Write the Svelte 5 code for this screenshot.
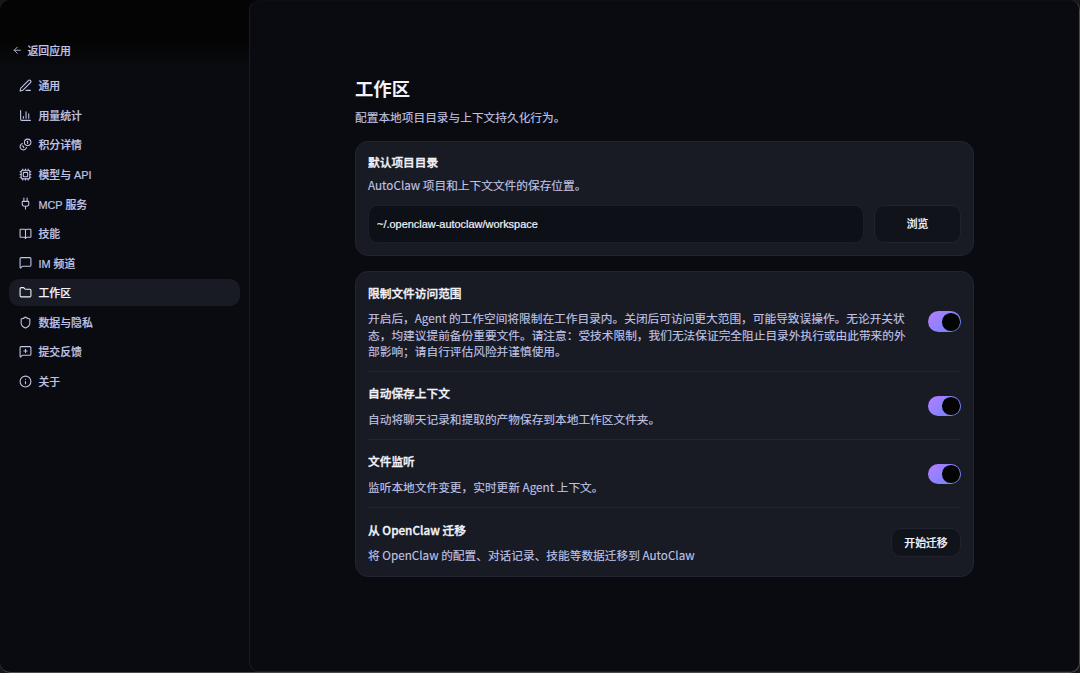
<script lang="ts">
	let active = $state('workspace');

	const navItems = [
		{ id: 'general', label: '通用' },
		{ id: 'usage', label: '用量统计' },
		{ id: 'credits', label: '积分详情' },
		{ id: 'models', label: '模型与 API' },
		{ id: 'mcp', label: 'MCP 服务' },
		{ id: 'skills', label: '技能' },
		{ id: 'im', label: 'IM 频道' },
		{ id: 'workspace', label: '工作区' },
		{ id: 'privacy', label: '数据与隐私' },
		{ id: 'feedback', label: '提交反馈' },
		{ id: 'about', label: '关于' }
	];

	let workspacePath = $state('~/.openclaw-autoclaw/workspace');

	let settings = $state([
		{
			id: 'restrict',
			title: '限制文件访问范围',
			text: '开启后，Agent 的工作空间将限制在工作目录内。关闭后可访问更大范围，可能导致误操作。无论开关状态，均建议提前备份重要文件。请注意：受技术限制，我们无法保证完全阻止目录外执行或由此带来的外部影响；请自行评估风险并谨慎使用。',
			on: true
		},
		{
			id: 'autosave',
			title: '自动保存上下文',
			text: '自动将聊天记录和提取的产物保存到本地工作区文件夹。',
			on: true
		},
		{
			id: 'watch',
			title: '文件监听',
			text: '监听本地文件变更，实时更新 Agent 上下文。',
			on: true
		}
	]);
</script>

{#snippet icon(id: string)}
	<svg class="icon" viewBox="0 0 24 24">
		{#if id === 'general'}
			<path d="M13 21h8" />
			<path d="M21.174 6.812a1 1 0 0 0-3.986-3.987L3.842 16.174a2 2 0 0 0-.5.83l-1.321 4.352a.5.5 0 0 0 .623.622l4.353-1.32a2 2 0 0 0 .83-.497z" />
		{:else if id === 'usage'}
			<path d="M3 3v16a2 2 0 0 0 2 2h16" />
			<path d="M8 17v-3M13 17V5M18 17V9" />
		{:else if id === 'credits'}
			<path d="M13.744 17.736a6 6 0 1 1-7.48-7.48" />
			<path d="M15 6h1v4" />
			<path d="m6.134 14.768.866-.5 2 3.464" />
			<circle cx="16" cy="8" r="6" />
		{:else if id === 'models'}
			<rect x="4" y="4" width="16" height="16" rx="2" />
			<rect x="8" y="8" width="8" height="8" rx="1" />
			<path d="M7 2v2M12 2v2M17 2v2M7 20v2M12 20v2M17 20v2M2 7h2M2 12h2M2 17h2M20 7h2M20 12h2M20 17h2" />
		{:else if id === 'mcp'}
			<path d="M12 22v-5M15 8V2M9 8V2" />
			<path d="M17 8a1 1 0 0 1 1 1v4a4 4 0 0 1-4 4h-4a4 4 0 0 1-4-4V9a1 1 0 0 1 1-1z" />
		{:else if id === 'skills'}
			<path d="M12 5v16" />
			<path d="M12 5a3 3 0 0 0-2-1H3a1 1 0 0 0-1 1v13a1 1 0 0 0 1 1h6a3 3 0 0 1 3 2 3 3 0 0 1 3-2h6a1 1 0 0 0 1-1V5a1 1 0 0 0-1-1h-7a3 3 0 0 0-2 1z" />
		{:else if id === 'im'}
			<path d="M22 17a2 2 0 0 1-2 2H6.828a2 2 0 0 0-1.414.586l-2.202 2.202A.71.71 0 0 1 2 21.286V5a2 2 0 0 1 2-2h16a2 2 0 0 1 2 2z" />
		{:else if id === 'workspace'}
			<path d="M20 20a2 2 0 0 0 2-2V8a2 2 0 0 0-2-2h-7.9a2 2 0 0 1-1.69-.9L9.6 3.9A2 2 0 0 0 7.93 3H4a2 2 0 0 0-2 2v13a2 2 0 0 0 2 2z" />
		{:else if id === 'privacy'}
			<path d="M20 13c0 5-3.5 7.5-7.66 8.95a1 1 0 0 1-.67-.01C7.5 20.5 4 18 4 13V6a1 1 0 0 1 1-1c2 0 4.5-1.2 6.24-2.72a1.17 1.17 0 0 1 1.52 0C14.51 3.81 17 5 19 5a1 1 0 0 1 1 1z" />
		{:else if id === 'feedback'}
			<path d="M22 17a2 2 0 0 1-2 2H6.828a2 2 0 0 0-1.414.586l-2.202 2.202A.71.71 0 0 1 2 21.286V5a2 2 0 0 1 2-2h16a2 2 0 0 1 2 2z" />
			<path d="M12 8v6M9 11h6" />
		{:else}
			<circle cx="12" cy="12" r="10" />
			<path d="M12 16v-4M12 8h.01" />
		{/if}
	</svg>
{/snippet}

<div class="window">
	<aside class="sidebar">
		<button class="back">
			<svg class="arrow" viewBox="0 0 24 24"><path d="m12 19-7-7 7-7M19 12H5" /></svg>
			<span>返回应用</span>
		</button>
		<nav>
			{#each navItems as item (item.id)}
				<button class="navItem" class:active={active === item.id} onclick={() => (active = item.id)}>
					{@render icon(item.id)}
					<span>{item.label}</span>
				</button>
			{/each}
		</nav>
	</aside>

	<main>
		<div class="content">
			<h1>工作区</h1>
			<p class="intro">配置本地项目目录与上下文持久化行为。</p>

			<section class="card folder">
				<h2>默认项目目录</h2>
				<p>AutoClaw 项目和上下文文件的保存位置。</p>
				<div class="pathRow">
					<input bind:value={workspacePath} spellcheck="false" />
					<button class="browse"><span>浏览</span></button>
				</div>
			</section>

			<section class="card options">
				{#each settings as setting (setting.id)}
					<div class="row {setting.id}">
						<div class="text">
							<h2>{setting.title}</h2>
							<p>{setting.text}</p>
						</div>
						<button
							class="toggle"
							class:on={setting.on}
							aria-label={setting.title}
							onclick={() => (setting.on = !setting.on)}
						>
							<span class="knob"></span>
						</button>
					</div>
				{/each}
				<div class="row migrate">
					<div class="text">
						<h2>从 OpenClaw 迁移</h2>
						<p>将 OpenClaw 的配置、对话记录、技能等数据迁移到 AutoClaw</p>
					</div>
					<button class="start"><span>开始迁移</span></button>
				</div>
			</section>
		</div>
	</main>
</div>

<style>
	:global(body) {
		margin: 0;
		background: #17151d;
	}

	.window {
		display: flex;
		box-sizing: border-box;
		width: 1080px;
		height: 673px;
		overflow: hidden;
		border-right: 1px solid #4a494e;
		border-bottom: 1px solid #4a494e;
		border-radius: 10px;
		background: linear-gradient(#040404 40px, #0a0b10 68px);
		font-family: 'Noto Sans CJK SC', sans-serif;
		color: #f2f3fa;
	}

	button,
	input {
		box-sizing: border-box;
		margin: 0;
		font-family: 'Liberation Sans', 'Noto Sans CJK SC', sans-serif;
		font-size: 10.85px;
		font-weight: 500;
		-webkit-text-stroke: 0.2px currentColor;
	}

	button {
		cursor: pointer;
	}

	svg {
		flex: none;
		fill: none;
		stroke: currentColor;
		stroke-width: 2;
		stroke-linecap: round;
		stroke-linejoin: round;
	}

	.sidebar {
		box-sizing: border-box;
		flex: none;
		width: 249px;
		padding: 40px 9.5px 0 9px;
	}

	.back {
		display: flex;
		align-items: center;
		gap: 5px;
		height: 20px;
		padding: 0 3px;
		border: 0;
		background: none;
		color: #c0c4e4;
	}

	.back span {
		padding-bottom: 1px;
	}

	.arrow {
		width: 10.5px;
		height: 10.5px;
	}

	nav {
		display: flex;
		flex-direction: column;
		gap: 2.92px;
		padding-top: 12.4px;
	}

	.navItem {
		display: flex;
		align-items: center;
		gap: 6.5px;
		height: 26.65px;
		padding: 0 10px;
		border: 0;
		border-radius: 10px;
		background: transparent;
		color: #c0c4e4;
		text-align: left;
	}

	.navItem span {
		padding-bottom: 0.8px;
	}

	.navItem.active {
		background: #181a24;
		color: #f2f3fa;
	}

	.icon {
		width: 13px;
		height: 13px;
	}

	main {
		box-sizing: border-box;
		flex: 1;
		border: 1px solid #1a1b26;
		border-top-color: #0d0e14;
		border-right: 0;
		border-radius: 10px;
		background: #0a0b10;
	}

	.content {
		width: 619px;
		padding: 73px 0 0 105px;
	}

	h1,
	h2,
	p {
		margin: 0;
	}

	h1 {
		font-size: 18.33px;
		font-weight: 700;
		line-height: 28px;
	}

	.intro {
		margin-top: 7px;
	}

	h2 {
		font-size: 11.7px;
		font-weight: 500;
		line-height: 18px;
		-webkit-text-stroke: 0.35px currentColor;
	}

	p {
		font-size: 11.7px;
		line-height: 16.5px;
		color: #c0c4e4;
		-webkit-text-stroke: 0.12px currentColor;
	}

	.card {
		box-sizing: border-box;
		border: 1px solid #222431;
		border-radius: 13px;
		background: #181a24;
	}

	.folder {
		height: 115px;
		margin-top: 15px;
		padding: 11px 12px 12px;
	}

	.folder p {
		margin-top: 6.2px;
	}

	.pathRow {
		display: flex;
		gap: 10px;
		margin-top: 12.3px;
	}

	input {
		flex: 1;
		height: 38px;
		padding: 0 8px 1px;
		border: 1px solid #1c1e29;
		border-radius: 10px;
		outline: none;
		background: #0d1016;
		color: #f2f3fa;
		font-size: 10.95px;
	}

	.browse,
	.start {
		border: 1px solid #20222e;
		border-radius: 10px;
		background: #11131a;
		color: #f2f3fa;
	}

	.browse {
		width: 87px;
		height: 38px;
		padding: 0 6px 2px;
	}

	.options {
		height: 306px;
		margin-top: 15.7px;
		padding: 0 12px;
	}

	.row {
		display: flex;
		align-items: center;
		justify-content: space-between;
		box-sizing: border-box;
		height: 68px;
		border-bottom: 1px solid #242632;
	}

	.row.restrict {
		height: 100.3px;
	}

	.row.migrate {
		border-bottom: 0;
	}

	.text {
		max-width: 540px;
	}

	.text p {
		margin-top: 8px;
	}

	.autosave .text p,
	.watch .text p {
		margin-top: 9px;
	}

	.toggle {
		display: flex;
		flex: none;
		align-items: center;
		width: 33.4px;
		height: 20.8px;
		padding: 0 1.3px;
		border: 0;
		border-radius: 11px;
		background: #2b2e3d;
	}

	.toggle.on {
		justify-content: flex-end;
		background: linear-gradient(135deg, #b67cff, #6088ff);
	}

	.knob {
		width: 17.6px;
		height: 17.6px;
		border-radius: 50%;
		background: #040404;
	}

	.start {
		width: 70px;
		height: 29px;
		padding: 0 6px 1px;
	}
</style>
